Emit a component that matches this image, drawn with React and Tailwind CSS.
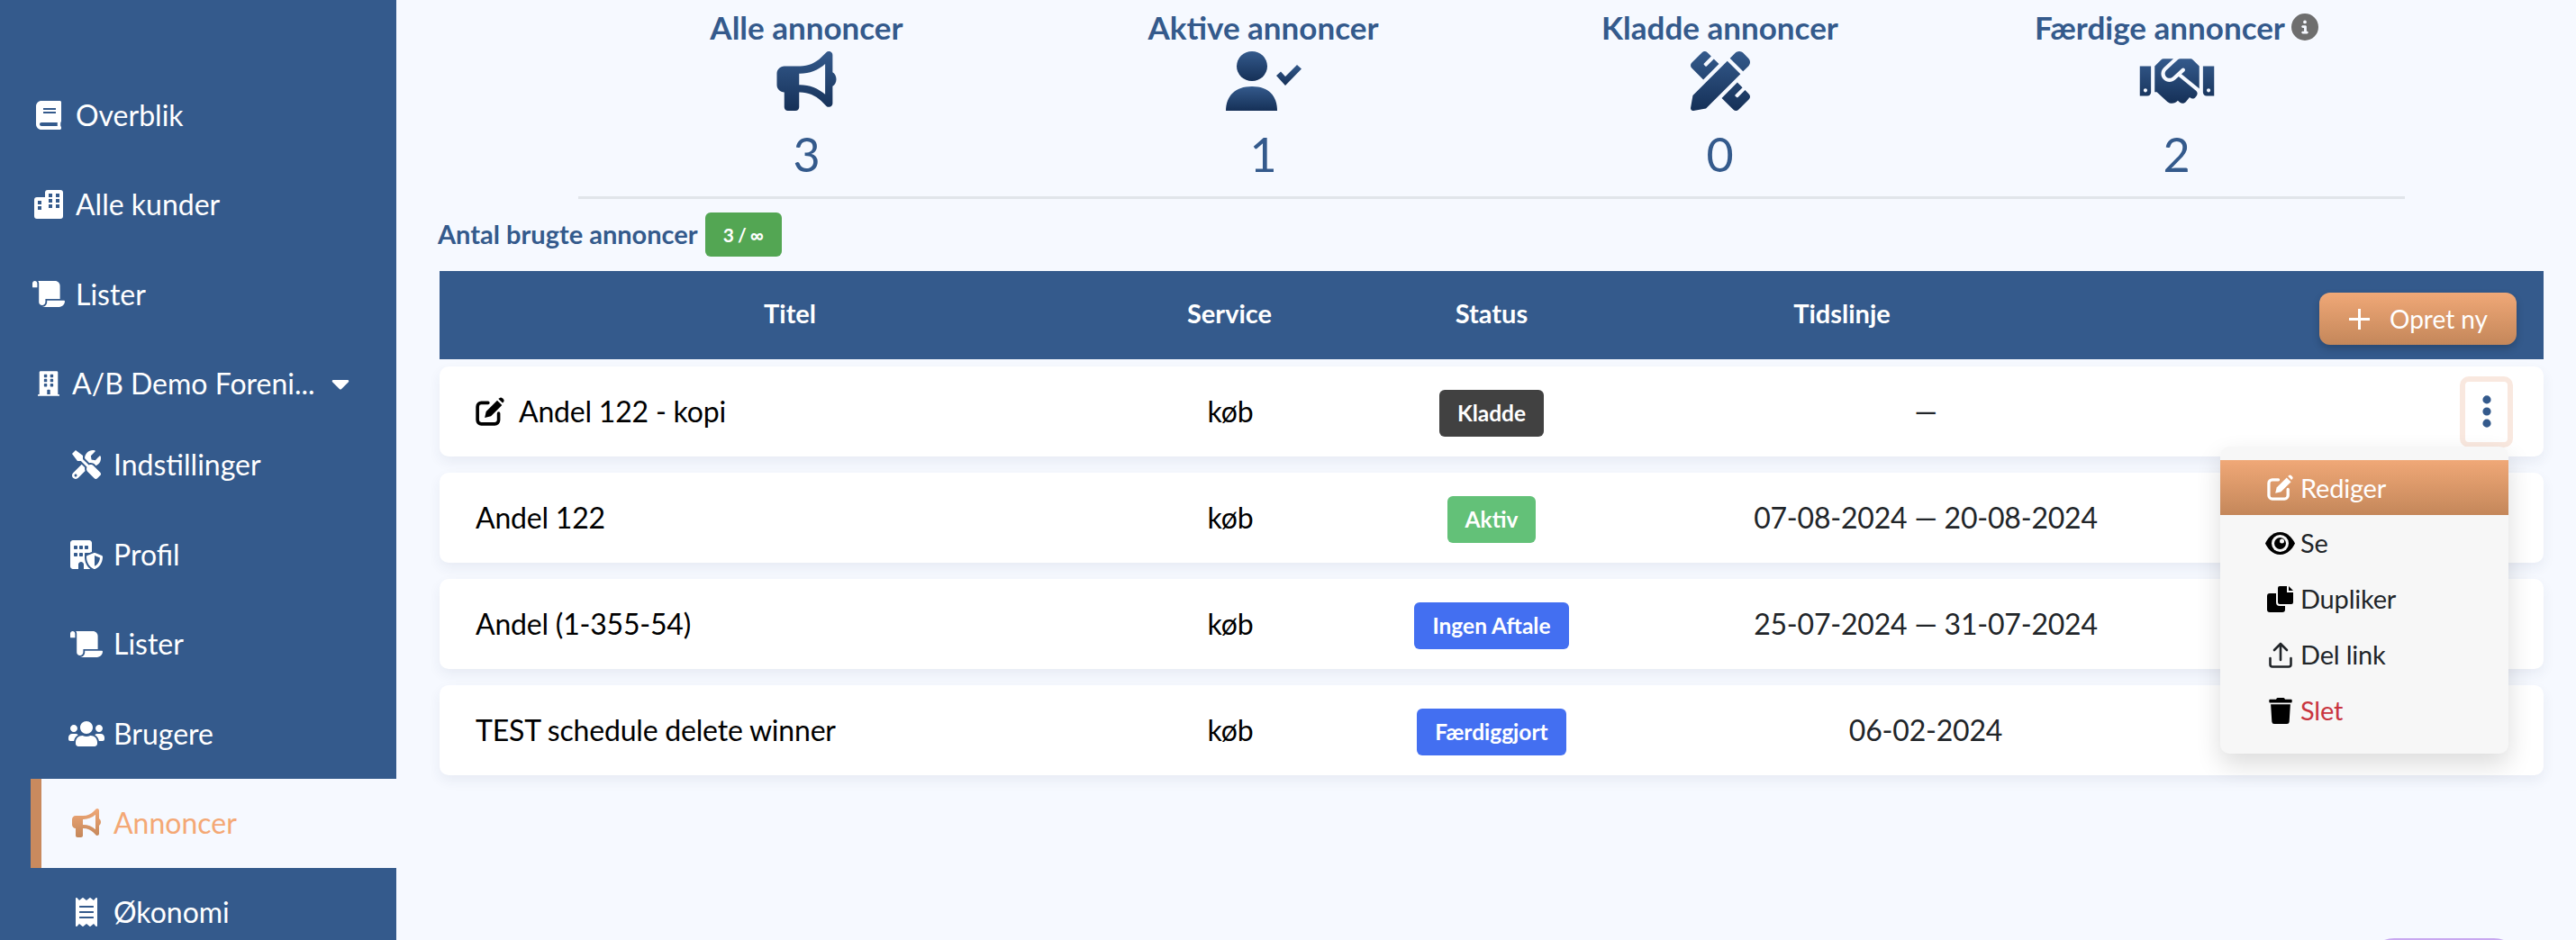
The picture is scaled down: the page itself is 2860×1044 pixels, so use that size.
import { FaBook, FaScroll, FaBuilding, FaTools, FaUsers, FaReceipt, FaPencilRuler, FaHandshake, FaCaretDown, FaTrash } from "react-icons/fa";
import { FaBullhorn, FaBuildingShield, FaCircleInfo, FaEllipsisVertical } from "react-icons/fa6";

function CityIcon({ className }) {
  return (
    <svg viewBox="0 0 32 32" className={className} fill="currentColor">
      <path
        fillRule="evenodd"
        d="M15 0h14a3 3 0 0 1 3 3v26a3 3 0 0 1-3 3H3a3 3 0 0 1-3-3V11a3 3 0 0 1 3-3h9V3a3 3 0 0 1 3-3ZM16 4v4h4V4ZM24 4v4h4V4ZM16 10v4h4v-4ZM24 10v4h4v-4ZM16 16v4h4v-4ZM24 16v4h4v-4ZM4 12v4h4v-4ZM4 18v4h4v-4Z"
      />
    </svg>
  );
}

function EyeIcon() {
  return (
    <svg viewBox="0 0 33 25" className="w-[33px] h-[25px]">
      <path d="M16.500 0C25.500 0 31 8 33 12.500 31 17 25.500 25 16.500 25S2 17 0 12.500C2 8 7.500 0 16.500 0Z" fill="#000" />
      <circle cx="16.500" cy="12.500" r="9.500" fill="#f7f7f7" />
      <circle cx="16.500" cy="12.500" r="6.500" fill="#000" />
      <circle cx="18.500" cy="10" r="2.500" fill="#f7f7f7" />
    </svg>
  );
}

function CopyIcon() {
  return (
    <svg viewBox="0 0 29 29" className="w-[29px] h-[29px]" fill="#000">
      <path d="M12 2a2 2 0 0 1 2-2h8v7h7v11a2 2 0 0 1-2 2H14a2 2 0 0 1-2-2Z" />
      <path d="M24 0l5 5h-5Z" />
      <path d="M3 8h7v10a4 4 0 0 0 4 4h6v4a3 3 0 0 1-3 3H3a3 3 0 0 1-3-3V11a3 3 0 0 1 3-3Z" />
    </svg>
  );
}

function UploadIcon() {
  return (
    <svg viewBox="0 0 26 29" className="w-[26px] h-[29px]" fill="none" stroke="#212529" strokeWidth="2.600" strokeLinecap="round" strokeLinejoin="round">
      <path d="M13 2v18M6 9l7-7 7 7" />
      <path d="M1.500 18v7a2.500 2.500 0 0 0 2.500 2.500h18a2.500 2.500 0 0 0 2.500-2.500v-7" />
    </svg>
  );
}

function EditIcon({ className }) {
  return (
    <svg viewBox="0 0 30 30" className={className}>
      <path d="M13 6H6a4 4 0 0 0-4 4v14a4 4 0 0 0 4 4h14a4 4 0 0 0 4-4v-7" fill="none" stroke="currentColor" strokeWidth="3.400" strokeLinecap="round" />
      <path d="M22.500 3.500l5 5L16 20l-6.500 1.500L11 15Z" fill="currentColor" />
      <path d="M24 2l.8-.8a2.200 2.200 0 0 1 3.100 0l1 1a2.200 2.200 0 0 1 0 3.100l-.8.8Z" fill="currentColor" />
    </svg>
  );
}

function UserCheckIcon() {
  return (
    <svg viewBox="0 0 84 66" className="w-[84px] h-[66px] fill-[url(#navyGrad)]">
      <ellipse cx="29" cy="16.500" rx="17" ry="16.500" />
      <path d="M0 66C0 50 10 39 29 39S57 50 57 66Z" />
      <path d="M56 27l5-4.500 5 5.500 13-13 5 4.500-18 18.500Z" />
    </svg>
  );
}

const NAV_TOP = [
  { label: "Overblik", Icon: FaBook, size: "w-[28px] h-[32px]" },
  { label: "Alle kunder", Icon: CityIcon, size: "w-[32px] h-[32px]" },
  { label: "Lister", Icon: FaScroll, size: "w-[36px] h-[29px]" },
];

const NAV_SUB = [
  { key: "settings", label: "Indstillinger", Icon: FaTools, size: "w-[32px] h-[32px]" },
  { key: "profile", label: "Profil", Icon: FaBuildingShield, size: "w-[36px] h-[32px]" },
  { key: "lists", label: "Lister", Icon: FaScroll, size: "w-[36px] h-[29px]" },
  { key: "users", label: "Brugere", Icon: FaUsers, size: "w-[40px] h-[32px]" },
];

const ROWS = [
  { title: "Andel 122 - kopi", edit: true, status: "Kladde", color: "bg-[#414141]", time: "—" },
  { title: "Andel 122", status: "Aktiv", color: "bg-[#63c178]", time: "07-08-2024 — 20-08-2024" },
  { title: "Andel (1-355-54)", status: "Ingen Aftale", color: "bg-[#436ff1]", time: "25-07-2024 — 31-07-2024" },
  { title: "TEST schedule delete winner", status: "Færdiggjort", color: "bg-[#436ff1]", time: "06-02-2024" },
];

function Stat({ title, number, info, children }) {
  return (
    <div className="flex flex-col items-center">
      <div className="flex items-center gap-[7px] h-[44px] mt-[8px]">
        <span className="text-[35px] leading-[44px] font-bold text-[#345a8c]">{title}</span>
        {info && <FaCircleInfo className="w-[30px] h-[30px] text-[#6e6e6e]" />}
      </div>
      <div className="flex items-center justify-center h-[66px] mt-[5px]">{children}</div>
      <div className="text-[52px] leading-[60px] mt-[18px] text-[#345a8c]">{number}</div>
    </div>
  );
}

function NavRow({ label, Icon, size }) {
  return (
    <div className="flex items-center h-[99.500px] pl-[36px] text-white text-[32px]">
      <span className="w-[36px] mr-[12px] flex items-center justify-center">
        <Icon className={size} />
      </span>
      {label}
    </div>
  );
}

function SubRow({ label, Icon, size }) {
  return (
    <div className="flex items-center h-[99.500px] pl-[76px] text-white text-[32px]">
      <span className="w-[40px] mr-[10px] flex items-center justify-center">
        <Icon className={size} />
      </span>
      {label}
    </div>
  );
}

function Sidebar() {
  return (
    <aside className="w-[440px] shrink-0 bg-[#345a8c] pt-[78px] overflow-hidden">
      {NAV_TOP.map((item) => (
        <NavRow key={item.label} {...item} />
      ))}
      <div className="flex items-center h-[90px] pt-[8px] pl-[42px] text-white text-[32px]">
        <FaBuilding className="w-[24px] h-[32px] mr-[14px]" />
        <span>A/B Demo Foreni...</span>
        <FaCaretDown className="w-[24px] h-[32px] ml-[16px]" />
      </div>
      {NAV_SUB.map(({ key, ...item }) => (
        <SubRow key={key} {...item} />
      ))}
      <div className="flex items-center h-[99px] ml-[34px] pl-[34px] border-l-[12px] border-[#c98a5e] bg-[#f6f9ff] text-[#f4a875] text-[32px]">
        <FaBullhorn className="w-[32px] h-[32px] mr-[14px] fill-[url(#orangeGrad)]" />
        Annoncer
      </div>
      <div className="flex items-center h-[99px] pl-[84px] text-white text-[32px]">
        <FaReceipt className="w-[24px] h-[32px] mr-[18px]" />
        Økonomi
      </div>
    </aside>
  );
}

function MenuItem({ icon, label, className = "text-[#212529]" }) {
  return (
    <div className={`flex items-center h-[62px] pl-[50px] text-[29px] ${className}`}>
      <span className="w-[33px] mr-[6px] flex items-center justify-center">{icon}</span>
      {label}
    </div>
  );
}

function ActionMenu() {
  return (
    <div className="absolute right-[39px] top-[89px] w-[320px] h-[341px] pt-[15px] rounded-[10px] bg-[#f7f7f7] shadow-[0_12px_28px_rgba(0,0,0,0.14)] z-10">
      <div className="flex items-center h-[61px] pl-[50px] text-[29px] text-white bg-gradient-to-b from-[#f0a877] to-[#c4875a]">
        <span className="w-[33px] mr-[6px] flex items-center justify-center">
          <EditIcon className="w-[29px] h-[29px]" />
        </span>
        Rediger
      </div>
      <MenuItem icon={<EyeIcon />} label="Se" />
      <MenuItem icon={<CopyIcon />} label="Dupliker" />
      <MenuItem icon={<UploadIcon />} label="Del link" />
      <MenuItem icon={<FaTrash className="w-[26px] h-[29px] text-black" />} label="Slet" className="text-[#c9353f]" />
    </div>
  );
}

function Row({ row, index }) {
  return (
    <div className="relative grid grid-cols-[778px_200px_380px_584px_394px] items-center h-[100px] rounded-[10px] bg-white text-[32px] tracking-[-0.2px] shadow-[0_6px_14px_rgba(40,60,100,0.07)]">
      <div className="flex items-center pl-[40px] text-black">
        {row.edit && <EditIcon className="w-[32px] h-[32px] mr-[16px]" />}
        {row.title}
      </div>
      <div className="text-center text-black">køb</div>
      <div className="flex justify-center pt-[4px]">
        <span className={`flex items-center h-[52px] px-[20px] rounded-[6px] text-[24.500px] tracking-normal font-bold text-white ${row.color}`}>
          {row.status}
        </span>
      </div>
      <div className="text-center text-[#212529]">{row.time}</div>
      <div className="flex justify-end pr-[34px]">
        {index === 0 && (
          <div className="flex items-center justify-center w-[59px] h-[79px] rounded-[10px] border-[6px] border-[#f9e8df] bg-white">
            <FaEllipsisVertical className="w-[12px] h-[42px] text-[#345a8c]" />
          </div>
        )}
      </div>
      {index === 0 && <ActionMenu />}
    </div>
  );
}

export default function App() {
  return (
    <div className="relative flex w-[2860px] h-[1044px] overflow-hidden bg-[#f6f9ff] [font-family:Lato,sans-serif]">
      <svg className="absolute w-0 h-0">
        <defs>
          <linearGradient id="navyGrad" x1="0" y1="0" x2="0" y2="1">
            <stop offset="0%" stopColor="#345a8c" />
            <stop offset="100%" stopColor="#153057" />
          </linearGradient>
          <linearGradient id="orangeGrad" x1="0" y1="0" x2="0" y2="1">
            <stop offset="0%" stopColor="#f0a877" />
            <stop offset="100%" stopColor="#c4875a" />
          </linearGradient>
        </defs>
      </svg>

      <Sidebar />

      <main className="flex-1 pl-[48px] pr-[36px]">
        <div className="grid grid-cols-4 mx-[154px] h-[221px] border-b-[3px] border-[#e1e5ea]">
          <Stat title="Alle annoncer" number="3">
            <FaBullhorn className="w-[67px] h-[66px] fill-[url(#navyGrad)]" />
          </Stat>
          <Stat title="Aktive annoncer" number="1">
            <UserCheckIcon />
          </Stat>
          <Stat title="Kladde annoncer" number="0">
            <FaPencilRuler className="w-[66px] h-[66px] fill-[url(#navyGrad)]" />
          </Stat>
          <Stat title="Færdige annoncer" number="2" info>
            <FaHandshake className="w-[84px] h-[66px] fill-[url(#navyGrad)]" />
          </Stat>
        </div>

        <div className="flex items-center gap-[8px] h-[49px] mt-[15px] -ml-[2px]">
          <span className="text-[29px] pb-[2px] font-bold text-[#345a8c]">Antal brugte annoncer</span>
          <span className="flex items-center justify-center w-[85px] h-[49px] rounded-[6px] bg-[#53a653] text-white text-[21px] tracking-[-0.6px] font-bold">
            3 / ∞
          </span>
        </div>

        <div className="grid grid-cols-[778px_198px_384px_394px_582px] items-center h-[98px] mt-[16px] bg-[#345a8c] text-white text-[29px] font-bold">
          <div className="text-center pb-[4px]">Titel</div>
          <div className="text-center pb-[4px]">Service</div>
          <div className="text-center pb-[4px]">Status</div>
          <div className="text-center pb-[4px]">Tidslinje</div>
          <div className="flex justify-end pr-[30px] pt-[8px]">
            <button className="flex items-center w-[219px] h-[58px] pl-[33px] rounded-[12px] bg-gradient-to-b from-[#f0a877] to-[#c4875a] shadow-[0_4px_8px_rgba(0,0,0,0.2)] text-[28px] font-normal">
              <svg viewBox="0 0 23 23" className="w-[23px] h-[23px] mr-[22px]" stroke="currentColor" strokeWidth="3">
                <path d="M11.500 0v23M0 11.500h23" />
              </svg>
              Opret ny
            </button>
          </div>
        </div>

        <div className="flex flex-col gap-[18px] mt-[8px]">
          {ROWS.map((row, i) => (
            <Row key={row.title} row={row} index={i} />
          ))}
        </div>
      </main>

      <div className="absolute left-[2628px] top-[1042px] w-[171px] h-[60px] rounded-[30px] bg-[#c8a8f0]" />
    </div>
  );
}
